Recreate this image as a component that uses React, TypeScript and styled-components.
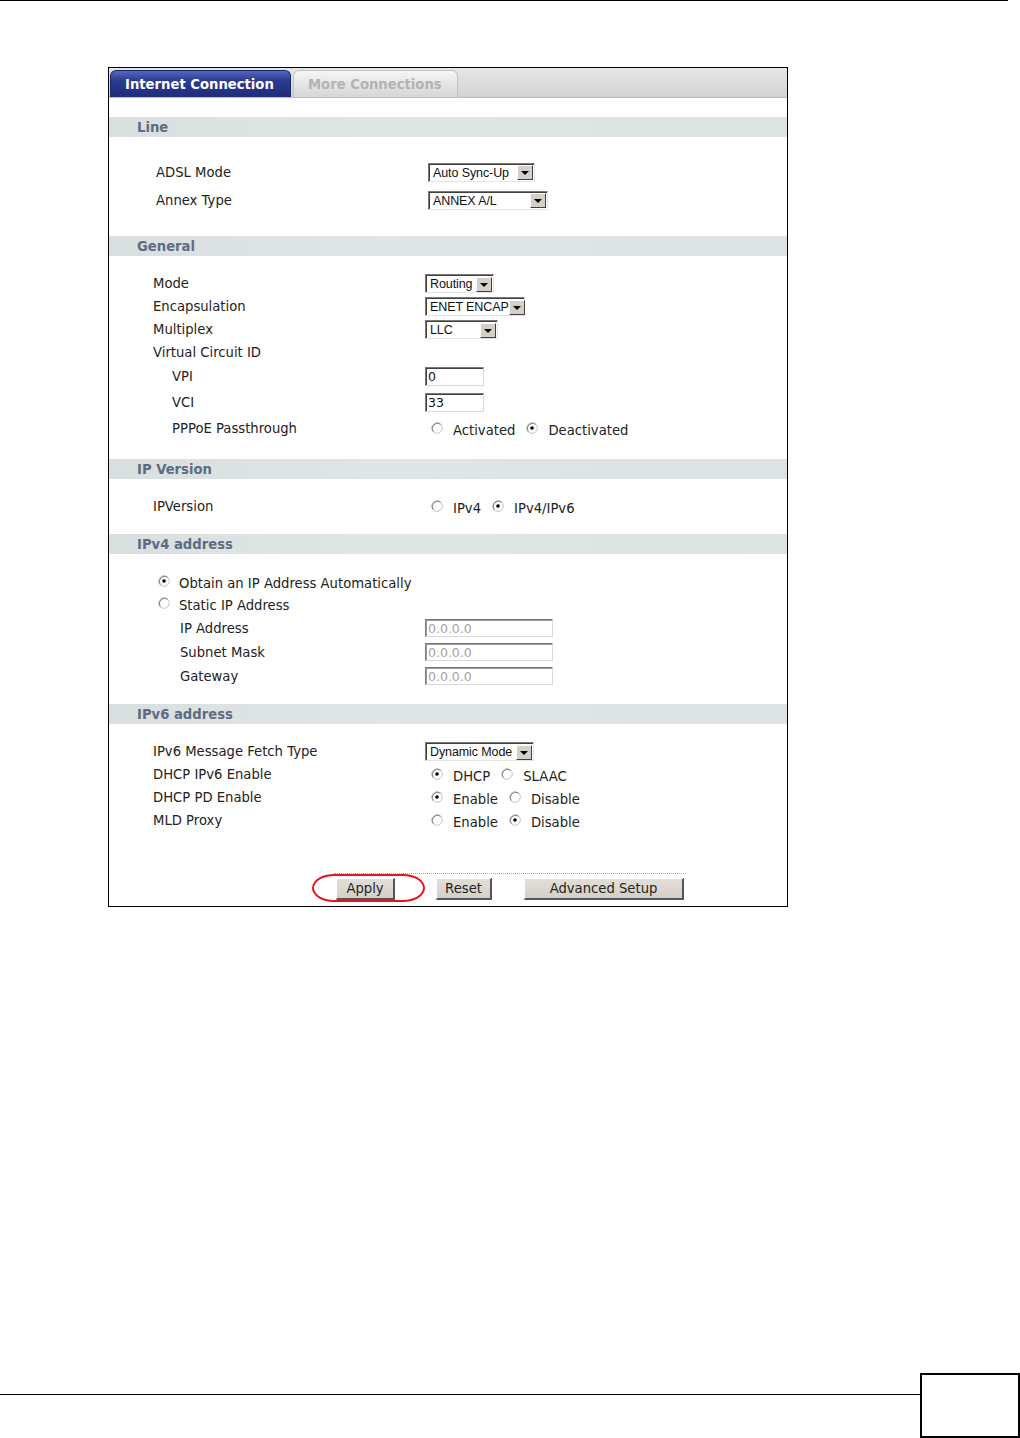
import { ReactNode } from 'react'
import { createGlobalStyle, styled } from 'styled-components'

const Global = createGlobalStyle`
  html, body {
    margin: 0;
    padding: 0;
    background: #fff;
  }
  body {
    font-family: "DejaVu Sans", Verdana, sans-serif;
    font-size: 13.2px;
    color: #222;
  }
`

const Page = styled.div`
  width: 1020px;
  height: 1438px;
  overflow: hidden;
  background: #fff;
`

const TopRule = styled.div`
  width: 1008px;
  height: 1px;
  background: #000;
`

const Frame = styled.div`
  margin: 66px 0 0 108px;
  width: 678px;
  height: 838px;
  border: 1px solid #000;
  display: flex;
  flex-direction: column;
`

const TabBar = styled.div`
  height: 29px;
  display: flex;
  align-items: flex-end;
  gap: 2px;
  padding-left: 1px;
  background: linear-gradient(#e6e6e6, #d3d3d3);
  border-bottom: 1px solid #bcbcbc;
`

const Tab = styled.div<{ $active?: boolean; $w: number }>`
  width: ${p => p.$w}px;
  height: 27px;
  box-sizing: border-box;
  display: flex;
  align-items: center;
  padding-left: 14px;
  border-radius: 6px 6px 0 0;
  font-weight: bold;
  font-size: 13.2px;
  color: ${p => (p.$active ? '#fff' : '#b3b3b3')};
  background: ${p =>
    p.$active
      ? 'linear-gradient(#5668bd, #2c3c92 35%, #1f2c7c)'
      : 'linear-gradient(#f6f6f6, #e2e2e2 60%, #d6d6d6)'};
  border: 1px solid ${p => (p.$active ? '#1a2670' : '#c2c2c2')};
  border-bottom: none;
`

const TopGap = styled.div`
  height: 19px;
`

const SectionHeader = styled.div`
  height: 20px;
  display: flex;
  align-items: center;
  padding-left: 28px;
  background: linear-gradient(90deg, #d9dfdf, #e0e6e6 40%, #dde3e3);
  font-weight: bold;
  font-size: 13.2px;
  color: #5d6b84;
`

const SectionBody = styled.div<{ $pt: number; $pb: number; $pl?: number }>`
  padding: ${p => p.$pt}px 0 ${p => p.$pb}px ${p => p.$pl ?? 44}px;
`

const Row = styled.div<{ $h: number; $col?: number }>`
  display: grid;
  grid-template-columns: ${p => p.$col ?? 272}px 1fr;
  align-items: center;
  height: ${p => p.$h}px;
`

const Label = styled.div<{ $indent?: number }>`
  padding-left: ${p => p.$indent ?? 0}px;
  display: flex;
  align-items: center;
  white-space: nowrap;
`

const Control = styled.div`
  display: flex;
  align-items: center;
`

const SelectBox = styled.div<{ $w: number }>`
  width: ${p => p.$w}px;
  height: 19px;
  box-sizing: border-box;
  display: flex;
  align-items: center;
  justify-content: space-between;
  border-top: 1px solid #7a7a7a;
  border-left: 1px solid #7a7a7a;
  border-right: 1px solid #e4e4e4;
  border-bottom: 1px solid #e4e4e4;
  box-shadow: inset 1px 1px 0 #404040;
  padding: 1px 1px 0 4px;
  font-family: "Liberation Sans", Arial, sans-serif;
  font-size: 12.5px;
  letter-spacing: -0.1px;
  white-space: nowrap;
  color: #111;
  background: #fff;
`

const ArrowButton = styled.div`
  width: 16px;
  height: 15px;
  flex: none;
  box-sizing: border-box;
  background: #d4d0c8;
  border-top: 1px solid #fff;
  border-left: 1px solid #fff;
  border-right: 1px solid #404040;
  border-bottom: 1px solid #404040;
  display: flex;
  align-items: center;
  justify-content: center;
  &::after {
    content: '';
    border-left: 4px solid transparent;
    border-right: 4px solid transparent;
    border-top: 4px solid #000;
    margin-top: 1px;
  }
`

const TextInput = styled.div<{ $w: number; $disabled?: boolean }>`
  width: ${p => p.$w}px;
  height: ${p => (p.$disabled ? 18 : 19)}px;
  box-sizing: border-box;
  display: flex;
  align-items: center;
  padding-left: 2px;
  border-top: 1px solid #7a7a7a;
  border-left: 1px solid #7a7a7a;
  border-right: 1px solid #d8d8d8;
  border-bottom: 1px solid #d8d8d8;
  box-shadow: inset 1px 1px 0 ${p => (p.$disabled ? '#9a9a9a' : '#404040')};
  font-size: 12.5px;
  color: ${p => (p.$disabled ? '#a4a4a4' : '#111')};
  background: #fff;
`

const RadioGroup = styled.div`
  display: flex;
  align-items: center;
  padding: 4px 0 0 6px;
`

const RadioItem = styled.label<{ $gap?: number }>`
  display: flex;
  align-items: center;
  gap: ${p => p.$gap ?? 10}px;
  margin-right: 11px;
  svg {
    margin-top: -5px;
    flex: none;
  }
`

const Actions = styled.div`
  margin: 41px 0 0 225px;
  width: 350px;
  border-top: 1px dotted #a8a8a8;
  padding: 4px 0 0 2px;
  display: flex;
`

const Button = styled.div<{ $w: number; $mr?: number }>`
  position: relative;
  width: ${p => p.$w}px;
  height: 22px;
  box-sizing: border-box;
  margin-right: ${p => p.$mr ?? 0}px;
  display: flex;
  align-items: center;
  justify-content: center;
  background: linear-gradient(#e2dfd8, #d4d0c8);
  border-top: 1px solid #fff;
  border-left: 1px solid #fff;
  border-right: 2px solid #555;
  border-bottom: 2px solid #555;
  font-size: 13.2px;
  color: #222;
`

const Highlight = styled.div`
  position: absolute;
  left: -25px;
  right: -32px;
  top: -5px;
  bottom: -4px;
  border: 2px solid #e8141c;
  border-radius: 22px / 14px;
  pointer-events: none;
`

const Footer = styled.div`
  margin-top: 466px;
  display: flex;
  align-items: flex-start;
`

const FooterRule = styled.div`
  flex: 1;
  height: 1px;
  margin-top: 21px;
  background: #000;
`

const PageBox = styled.div`
  width: 96px;
  height: 61px;
  border: 2px solid #000;
`

const RadioIcon = ({ checked }: { checked?: boolean }) => (
  <svg width="12" height="12" viewBox="0 0 12 12">
    <circle cx="6" cy="6" r="5.3" fill="#fff" stroke="#c4c4c4" strokeWidth="1" />
    <path d="M2.3 9.7 A5.3 5.3 0 0 1 9.7 2.3" fill="none" stroke="#7e7e7e" strokeWidth="1" />
    {checked && <circle cx="6" cy="6" r="1.8" fill="#000" />}
  </svg>
)

const Radio = ({ checked, children }: { checked?: boolean; children: ReactNode }) => (
  <RadioItem>
    <RadioIcon checked={checked} />
    {children}
  </RadioItem>
)

const Select = ({ w, children }: { w: number; children: ReactNode }) => (
  <SelectBox $w={w}>
    <span>{children}</span>
    <ArrowButton />
  </SelectBox>
)

export default function App() {
  return (
    <Page>
      <Global />
      <TopRule />
      <Frame>
        <TabBar>
          <Tab $active $w={181}>Internet Connection</Tab>
          <Tab $w={165}>More Connections</Tab>
        </TabBar>
        <TopGap />

        <SectionHeader>Line</SectionHeader>
        <SectionBody $pt={21} $pb={22} $pl={47}>
          <Row $h={28} $col={272}>
            <Label>ADSL Mode</Label>
            <Control><Select w={107}>Auto Sync-Up</Select></Control>
          </Row>
          <Row $h={28} $col={272}>
            <Label>Annex Type</Label>
            <Control><Select w={120}>ANNEX A/L</Select></Control>
          </Row>
        </SectionBody>

        <SectionHeader>General</SectionHeader>
        <SectionBody $pt={16} $pb={18}>
          <Row $h={23}>
            <Label>Mode</Label>
            <Control><Select w={69}>Routing</Select></Control>
          </Row>
          <Row $h={23}>
            <Label>Encapsulation</Label>
            <Control><Select w={100}>ENET ENCAP</Select></Control>
          </Row>
          <Row $h={23}>
            <Label>Multiplex</Label>
            <Control><Select w={73}>LLC</Select></Control>
          </Row>
          <Row $h={23}>
            <Label>Virtual Circuit ID</Label>
          </Row>
          <Row $h={25}>
            <Label $indent={19}>VPI</Label>
            <Control><TextInput $w={59}>0</TextInput></Control>
          </Row>
          <Row $h={27}>
            <Label $indent={19}>VCI</Label>
            <Control><TextInput $w={59}>33</TextInput></Control>
          </Row>
          <Row $h={25}>
            <Label $indent={19}>PPPoE Passthrough</Label>
            <RadioGroup>
              <Radio>Activated</Radio>
              <Radio checked>Deactivated</Radio>
            </RadioGroup>
          </Row>
        </SectionBody>

        <SectionHeader>IP Version</SectionHeader>
        <SectionBody $pt={16} $pb={17}>
          <Row $h={22}>
            <Label>IPVersion</Label>
            <RadioGroup>
              <Radio>IPv4</Radio>
              <Radio checked>IPv4/IPv6</Radio>
            </RadioGroup>
          </Row>
        </SectionBody>

        <SectionHeader>IPv4 address</SectionHeader>
        <SectionBody $pt={18} $pb={16}>
          <Row $h={22}>
            <Label $indent={5}>
              <RadioItem $gap={9}><RadioIcon checked />Obtain an IP Address Automatically</RadioItem>
            </Label>
          </Row>
          <Row $h={22}>
            <Label $indent={5}>
              <RadioItem $gap={9}><RadioIcon />Static IP Address</RadioItem>
            </Label>
          </Row>
          <Row $h={24}>
            <Label $indent={27}>IP Address</Label>
            <Control><TextInput $w={128} $disabled>0.0.0.0</TextInput></Control>
          </Row>
          <Row $h={24}>
            <Label $indent={27}>Subnet Mask</Label>
            <Control><TextInput $w={128} $disabled>0.0.0.0</TextInput></Control>
          </Row>
          <Row $h={24}>
            <Label $indent={27}>Gateway</Label>
            <Control><TextInput $w={128} $disabled>0.0.0.0</TextInput></Control>
          </Row>
        </SectionBody>

        <SectionHeader>IPv6 address</SectionHeader>
        <SectionBody $pt={16} $pb={0}>
          <Row $h={23}>
            <Label>IPv6 Message Fetch Type</Label>
            <Control><Select w={109}>Dynamic Mode</Select></Control>
          </Row>
          <Row $h={23}>
            <Label>DHCP IPv6 Enable</Label>
            <RadioGroup>
              <Radio checked>DHCP</Radio>
              <Radio>SLAAC</Radio>
            </RadioGroup>
          </Row>
          <Row $h={23}>
            <Label>DHCP PD Enable</Label>
            <RadioGroup>
              <Radio checked>Enable</Radio>
              <Radio>Disable</Radio>
            </RadioGroup>
          </Row>
          <Row $h={23}>
            <Label>MLD Proxy</Label>
            <RadioGroup>
              <Radio>Enable</Radio>
              <Radio checked>Disable</Radio>
            </RadioGroup>
          </Row>
        </SectionBody>

        <Actions>
          <Button $w={59} $mr={41}>
            Apply
            <Highlight />
          </Button>
          <Button $w={56} $mr={32}>Reset</Button>
          <Button $w={160}>Advanced Setup</Button>
        </Actions>
      </Frame>
      <Footer>
        <FooterRule />
        <PageBox />
      </Footer>
    </Page>
  )
}
